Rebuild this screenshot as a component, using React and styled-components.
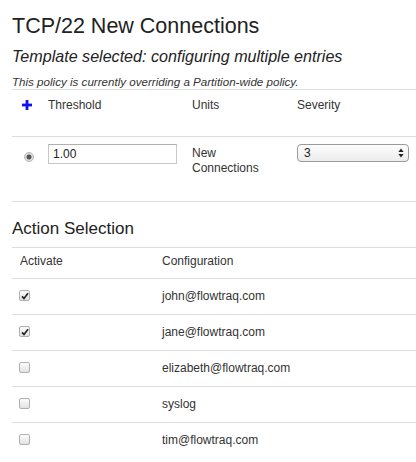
import styled, { createGlobalStyle } from 'styled-components'

const Global = createGlobalStyle`
  html, body { margin: 0; padding: 0; background: #fff; }
  body {
    font-family: "Liberation Sans", Arial, sans-serif;
    color: #333;
    overflow: hidden;
  }
`

const Page = styled.div`
  padding-left: 12px;
  width: 404px;
`

const Title = styled.h1`
  margin: 14px 0 0;
  font-size: 21.5px;
  line-height: 24px;
  font-weight: normal;
  color: #222;
`

const Subtitle = styled.h2`
  margin: 8px 0 0;
  font-size: 16.1px;
  line-height: 20px;
  font-weight: normal;
  font-style: italic;
  color: #222;
`

const Note = styled.p`
  margin: 8px 0 0;
  font-size: 11.6px;
  line-height: 15px;
  font-style: italic;
  color: #333;
`

const SectionTitle = styled.h3`
  margin: 17px 0 0;
  font-size: 17px;
  line-height: 20px;
  font-weight: normal;
  color: #222;
`

const Table = styled.table`
  width: 100%;
  border-collapse: collapse;
  table-layout: fixed;
  font-size: 12px;
  line-height: 17px;
  margin-top: ${p => p.$top || 0}px;
`

const Th = styled.th`
  text-align: left;
  font-weight: normal;
  vertical-align: top;
  border-top: 1px solid #ddd;
  padding: ${p => p.$pad || '7px 8px 0'};
  height: ${p => p.$h}px;
  box-sizing: border-box;
  width: ${p => (p.$w ? `${p.$w}px` : 'auto')};
`

const Td = styled.td`
  vertical-align: top;
  border-top: 1px solid #ddd;
  border-bottom: ${p => (p.$closed ? '1px solid #ddd' : 'none')};
  padding: ${p => p.$pad || '9px 8px'};
  height: ${p => (p.$h ? `${p.$h}px` : 'auto')};
  box-sizing: border-box;
`

const PlusIcon = () => (
  <svg width="10" height="10" viewBox="0 0 10 10" style={{ display: 'block', margin: '3px 0 0 2px' }}>
    <rect x="3.6" y="0" width="2.8" height="10" fill="#1010f0" />
    <rect x="0" y="3.6" width="10" height="2.8" fill="#1010f0" />
  </svg>
)

const Radio = styled.span`
  display: block;
  width: 10px;
  height: 10px;
  margin: 8px 0 0 4px;
  border-radius: 50%;
  border: 1px solid #b5b5b5;
  background: radial-gradient(circle, #555 0 2.2px, #d8d8d8 2.8px, #f2f2f2 100%);
  box-sizing: border-box;
`

const TextInput = styled.input`
  display: block;
  width: 129px;
  height: 20px;
  margin: 0;
  padding: 0 4px;
  border: 1px solid #c8c8c8;
  border-top-color: #b0b0b0;
  box-sizing: border-box;
  font: 12px "Liberation Sans", Arial, sans-serif;
  color: #222;
  background: #fff;
  outline: none;
`

const Units = styled.div`
  margin-top: 1px;
  line-height: 15px;
`

const Select = styled.div`
  display: flex;
  align-items: center;
  justify-content: space-between;
  width: 112px;
  height: 18px;
  padding: 0 4px 0 6px;
  box-sizing: border-box;
  border: 1px solid #9a9a9a;
  border-radius: 4px;
  background: linear-gradient(#fdfdfd, #ececec);
  font-size: 12px;
  color: #222;
`

const Arrows = () => (
  <svg width="6" height="10" viewBox="0 0 6 10">
    <path d="M3 0.5 L5.6 4 H0.4 Z" fill="#222" />
    <path d="M3 9.5 L5.6 6 H0.4 Z" fill="#222" />
  </svg>
)

const Box = styled.span`
  display: flex;
  align-items: center;
  justify-content: center;
  width: 11px;
  height: 11px;
  margin: 2px 0 0 -1px;
  border: 1px solid #b0b0b0;
  border-radius: 2px;
  box-sizing: border-box;
  background: linear-gradient(#fcfcfc, #e2e2e2);
`

const Checkbox = ({ checked }) => (
  <Box>
    {checked && (
      <svg width="8" height="8" viewBox="0 0 8 8">
        <path d="M1 4.4 L3 6.6 L7 1.2" stroke="#222" strokeWidth="1.6" fill="none" />
      </svg>
    )}
  </Box>
)

const actions = [
  { name: 'john@flowtraq.com', on: true },
  { name: 'jane@flowtraq.com', on: true },
  { name: 'elizabeth@flowtraq.com', on: false },
  { name: 'syslog', on: false },
  { name: 'tim@flowtraq.com', on: false },
]

export default function App() {
  return (
    <>
      <Global />
      <Page>
        <Title>TCP/22 New Connections</Title>
        <Subtitle>Template selected: configuring multiple entries</Subtitle>
        <Note>This policy is currently overriding a Partition-wide policy.</Note>

        <Table>
          <thead>
            <tr>
              <Th $w={28} $h={47}><PlusIcon /></Th>
              <Th $w={144} $h={47}>Threshold</Th>
              <Th $w={105} $h={47}>Units</Th>
              <Th $h={47}>Severity</Th>
            </tr>
          </thead>
          <tbody>
            <tr>
              <Td $closed $h={65} $pad="7px 0 0 8px"><Radio /></Td>
              <Td $closed $pad="7px 8px 0"><TextInput defaultValue="1.00" /></Td>
              <Td $closed $pad="8px 8px 0"><Units>New<br />Connections</Units></Td>
              <Td $closed $pad="7px 8px 0">
                <Select>
                  <span>3</span>
                  <Arrows />
                </Select>
              </Td>
            </tr>
          </tbody>
        </Table>

        <SectionTitle>Action Selection</SectionTitle>

        <Table $top={8}>
          <thead>
            <tr>
              <Th $w={142} $h={31} $pad="5px 8px 0">Activate</Th>
              <Th $h={31} $pad="5px 8px 0">Configuration</Th>
            </tr>
          </thead>
          <tbody>
            {actions.map(a => (
              <tr key={a.name}>
                <Td $h={36}><Checkbox checked={a.on} /></Td>
                <Td $h={36}>{a.name}</Td>
              </tr>
            ))}
          </tbody>
        </Table>
      </Page>
    </>
  )
}
